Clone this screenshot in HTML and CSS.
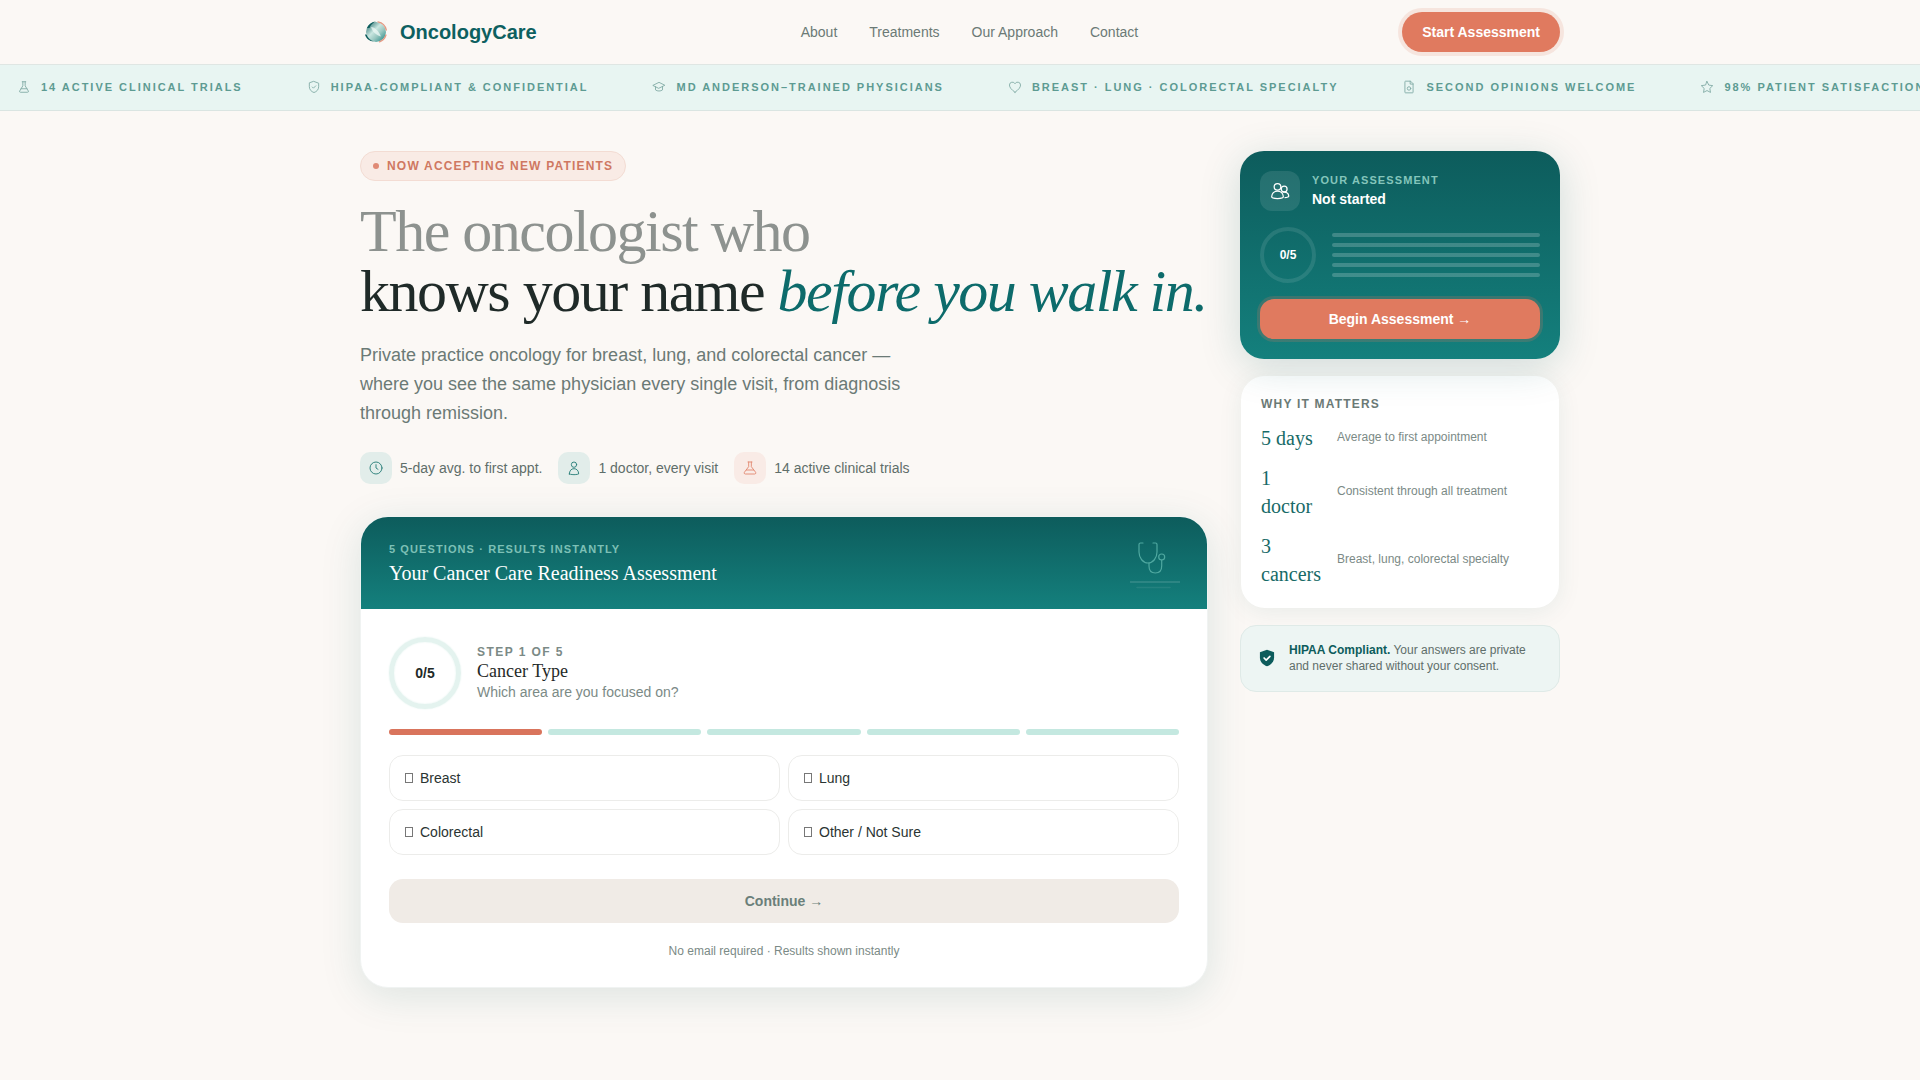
FILE: index.html
```html
<!DOCTYPE html>
<html lang="en">
<head>
<meta charset="utf-8">
<title>OncologyCare</title>
<link rel="stylesheet" href="styles.css">
</head>
<body>
<header class="nav">
  <div class="nav-inner">
    <a class="brand" href="#">
      <svg class="brand-mark" viewBox="0 0 24 24" width="24" height="24">
        <defs>
          <linearGradient id="lg" x1="0" y1="0" x2="1" y2="1">
            <stop offset="0" stop-color="#0d5c5c"/><stop offset=".42" stop-color="#c9e6e0"/><stop offset=".62" stop-color="#9cc9c2"/><stop offset="1" stop-color="#14807d"/>
          </linearGradient>
        </defs>
        <circle cx="12" cy="12" r="10" fill="url(#lg)"/>
        <path d="M2.500 14.500c1.500 3.500 4 6 7.500 7-4.500 0-8-3-9-7z" fill="#0d5c5c"/>
        <path d="M3 8c1.500-3.500 5-6.500 9-6.500-3 1-5.500 3.500-6.500 6.500z" fill="#0d5c5c"/>
        <path d="M14 1.800A10.500 10.500 0 0 1 22.300 10M22 15a10.500 10.500 0 0 1-6.500 6.800" fill="none" stroke="#e49a84" stroke-width="1.300" stroke-linecap="round"/>
        <path d="M7 7c4 0 8 4.500 10 9.500-4.500-1-8.500-4.500-10-9.500z" fill="#eef8f5" opacity=".75"/>
      </svg>
      <span class="brand-name">OncologyCare</span>
    </a>
    <nav class="nav-links">
      <a href="#">About</a><a href="#">Treatments</a><a href="#">Our Approach</a><a href="#">Contact</a>
    </nav>
    <a class="nav-cta" href="#">Start Assessment</a>
  </div>
</header>

<div class="ticker">
  <div class="tick"><svg viewBox="0 0 24 24"><path d="M9 3h6M10 3v7L4.500 19a1.500 1.500 0 0 0 1.300 2h12.400a1.500 1.500 0 0 0 1.300-2L14 10V3M7 15h10"/></svg><span>14 Active Clinical Trials</span></div>
  <div class="tick"><svg viewBox="0 0 24 24"><path d="M12 2.500l8 3v6c0 5-3.500 8.500-8 10-4.500-1.500-8-5-8-10v-6z"/><path d="M9 12l2 2 4-4"/></svg><span>HIPAA-Compliant &amp; Confidential</span></div>
  <div class="tick"><svg viewBox="0 0 24 24"><path d="M2 9l10-5 10 5-10 5z"/><path d="M6 11.500V17c3 2.500 9 2.500 12 0v-5.500"/></svg><span>MD Anderson–Trained Physicians</span></div>
  <div class="tick"><svg viewBox="0 0 24 24"><path d="M12 21C6 16.500 2.500 13 2.500 8.500A5 5 0 0 1 12 6.500a5 5 0 0 1 9.500 2C21.500 13 18 16.500 12 21z"/></svg><span>Breast · Lung · Colorectal Specialty</span></div>
  <div class="tick"><svg viewBox="0 0 24 24"><path d="M14 2H6a1 1 0 0 0-1 1v18a1 1 0 0 0 1 1h12a1 1 0 0 0 1-1V7z"/><path d="M14 2v5h5"/><circle cx="12" cy="14.500" r="3"/></svg><span>Second Opinions Welcome</span></div>
  <div class="tick"><svg viewBox="0 0 24 24"><path d="M12 2.500l3 6.200 6.800 1-5 4.800 1.200 6.800-6-3.200-6 3.200 1.200-6.800-5-4.800 6.800-1z"/></svg><span>98% Patient Satisfaction</span></div>
</div>

<main class="page">
  <section class="main-col">
    <div class="badge"><i class="dot"></i>Now Accepting New Patients</div>
    <h1><span class="h1-soft">The oncologist who</span><br>knows your name <em>before you walk in.</em></h1>
    <p class="lead">Private practice oncology for breast, lung, and colorectal cancer — where you see the same physician every single visit, from diagnosis through remission.</p>
    <ul class="chips">
      <li><span class="chip-ico"><svg viewBox="0 0 24 24"><circle cx="12" cy="12" r="9"/><path d="M12 7v5l3 2"/></svg></span>5-day avg. to first appt.</li>
      <li><span class="chip-ico"><svg viewBox="0 0 24 24"><circle cx="12" cy="7" r="4"/><path d="M5 21c0-5 3-8 7-8s7 3 7 8c0 0-3 1-7 1s-7-1-7-1z"/></svg></span>1 doctor, every visit</li>
      <li><span class="chip-ico coral"><svg viewBox="0 0 24 24"><path d="M9 3h6M10 3v7L3.500 18.500a1.800 1.800 0 0 0 1.500 2.500h14a1.800 1.800 0 0 0 1.500-2.500L14 10V3M6.500 15h11"/></svg></span>14 active clinical trials</li>
    </ul>

    <article class="quiz">
      <div class="quiz-head">
        <div>
          <div class="quiz-eyebrow">5 Questions · Results Instantly</div>
          <div class="quiz-title">Your Cancer Care Readiness Assessment</div>
        </div>
        <svg class="quiz-art" viewBox="0 0 50 50" width="50" height="50">
          <path d="M13 3H10.500C9.500 3 9 3.500 9 4.500V12c0 6 4 11 9 11s9-5 9-11V4.500C27 3.500 26.500 3 25.500 3H23"/>
          <path d="M19 23v3c0 5 3 7 6.300 7s6.400-2 6.400-7v-6"/>
          <circle cx="31.700" cy="17" r="3"/>
          <path class="faint" d="M0 42h50"/>
          <path class="fainter" d="M7 47.500h33"/>
        </svg>
      </div>
      <div class="quiz-body">
        <div class="step">
          <div class="ring"><span>0/5</span></div>
          <div class="step-text">
            <div class="step-label">Step 1 of 5</div>
            <div class="step-title">Cancer Type</div>
            <div class="step-sub">Which area are you focused on?</div>
          </div>
        </div>
        <div class="bars"><i class="on"></i><i></i><i></i><i></i><i></i></div>
        <div class="options">
          <button class="opt"><i class="tofu"></i>Breast</button>
          <button class="opt"><i class="tofu"></i>Lung</button>
          <button class="opt"><i class="tofu"></i>Colorectal</button>
          <button class="opt"><i class="tofu"></i>Other / Not Sure</button>
        </div>
        <button class="continue">Continue →</button>
        <p class="note">No email required · Results shown instantly</p>
      </div>
    </article>
  </section>

  <aside class="side">
    <div class="side-assess">
      <div class="sa-top">
        <span class="sa-ico"><svg viewBox="0 0 24 24"><circle cx="9" cy="7" r="4"/><circle cx="17" cy="9.500" r="3.500"/><path d="M2 19c0-4 3-7 7-7 4 0 7 3 7 7 0 1-3 2-7 2s-7-1-7-2z"/><path d="M15 13.500c4-1 7.500 1 7.500 4.500 0 1-2 1.800-5 2"/></svg></span>
        <div>
          <div class="sa-label">Your Assessment</div>
          <div class="sa-status">Not started</div>
        </div>
      </div>
      <div class="sa-mid">
        <div class="sa-ring"><span>0/5</span></div>
        <div class="sa-lines"><i></i><i></i><i></i><i></i><i></i></div>
      </div>
      <a class="sa-btn" href="#">Begin Assessment →</a>
    </div>

    <div class="side-why">
      <div class="why-h">Why It Matters</div>
      <div class="why-row"><div class="why-val">5 days</div><div class="why-txt">Average to first appointment</div></div>
      <div class="why-row"><div class="why-val">1 doctor</div><div class="why-txt">Consistent through all treatment</div></div>
      <div class="why-row"><div class="why-val">3 cancers</div><div class="why-txt">Breast, lung, colorectal specialty</div></div>
    </div>

    <div class="side-hipaa">
      <svg viewBox="0 0 24 24" width="20" height="20"><path class="sh" d="M12 2l8.500 3v6.500c0 5-3.500 8.800-8.500 10.500-5-1.700-8.500-5.500-8.500-10.500V5z"/><path class="ck" d="M8.500 12l2.500 2.500 4.500-4.500"/></svg>
      <p><strong>HIPAA Compliant.</strong> Your answers are private and never shared without your consent.</p>
    </div>
  </aside>
</main>
</body>
</html>
```

FILE: styles.css
```css
* { box-sizing: border-box; }
html, body { margin: 0; padding: 0; }
body {
  background: #fbf8f5;
  color: #1f2a28;
  font-family: "Liberation Sans", Arial, sans-serif;
  width: 1920px;
  height: 1080px;
  overflow: hidden;
}
a { text-decoration: none; color: inherit; }

.nav { height: 65px; border-bottom: 1px solid #dfe6e3; background: #fbf8f5; }
.nav-inner {
  width: 1200px; height: 64px; margin: 0 auto;
  display: flex; align-items: center; justify-content: space-between;
}
.brand { display: flex; align-items: center; gap: 12px; }
.brand-mark { margin-left: 4px; }
.brand-name { font-size: 20px; font-weight: 700; color: #0d6060; }
.nav-links { display: flex; gap: 32px; font-size: 14px; color: #6b7a76; }
.nav-cta {
  background: #e07a5f; color: #fff; font-size: 14px; font-weight: 700;
  height: 40px; padding: 0 20px; border-radius: 999px;
  display: flex; align-items: center;
  box-shadow: 0 0 0 4px rgba(224, 122, 95, .15);
}

.ticker {
  height: 46px; background: #e8f5f2; border-bottom: 1px solid #dae5e2;
  display: flex; align-items: center; gap: 64px;
  padding: 0 0 2px 17px; overflow: hidden; white-space: nowrap;
}
.tick {
  display: flex; align-items: center; gap: 10px; flex: none;
  font-size: 11px; font-weight: 700; letter-spacing: 0.18em;
  text-transform: uppercase; color: #5d9b92;
}
.tick svg {
  width: 14px; height: 14px; fill: none; stroke: #7fa9a3; stroke-width: 1.5;
  stroke-linecap: round; stroke-linejoin: round;
}

.page {
  width: 1200px; margin: 0 auto; padding-top: 40px;
  display: flex; gap: 32px; align-items: flex-start;
}
.main-col { width: 848px; flex: none; }
.side { width: 320px; flex: none; display: flex; flex-direction: column; gap: 17px; }

.badge {
  display: inline-flex; align-items: center; gap: 8px;
  height: 30px; padding: 0 12px;
  background: #f9ebe5; border: 1px solid #f3dcd3; border-radius: 999px;
  font-size: 12px; font-weight: 700; letter-spacing: 0.1em;
  text-transform: uppercase; color: #cf7862;
}
.dot { width: 6px; height: 6px; border-radius: 50%; background: #e08a75; }

h1 {
  margin: 20px 0 0; font-family: "Liberation Serif", "Times New Roman", serif;
  font-weight: 400; font-size: 60px; line-height: 60px; letter-spacing: -0.025em;
  color: #1f2a28;
}
.h1-soft { color: #8d928f; }
h1 em { color: #0d6b6b; font-style: italic; }

.lead {
  margin: 20px 0 0; width: 560px;
  font-size: 18px; line-height: 29px; color: #6b7a76;
}

.chips { list-style: none; margin: 24px 0 0; padding: 0; display: flex; gap: 16px; }
.chips li { display: flex; align-items: center; gap: 8px; font-size: 14px; color: #5f6e6a; }
.chip-ico {
  width: 32px; height: 32px; border-radius: 10px; background: #e2edea;
  display: flex; align-items: center; justify-content: center;
}
.chip-ico.coral { background: #f9ebe6; }
.chip-ico svg {
  width: 16px; height: 16px; fill: none; stroke: #2a7f7a; stroke-width: 1.4;
  stroke-linecap: round; stroke-linejoin: round;
}
.chip-ico.coral svg { stroke: #e28a72; }

.quiz {
  margin-top: 32px; height: 472px; background: #fff; border-radius: 28px;
  overflow: hidden; box-shadow: 0 8px 40px rgba(13, 92, 92, .13);
  border: 1px solid #f0f3f2;
}
.quiz-head {
  height: 92px; padding: 26px 28px 0;
  background: linear-gradient(180deg, #0d5c5c, #14807d);
  display: flex; justify-content: space-between; align-items: flex-start;
}
.quiz-eyebrow {
  font-size: 11px; font-weight: 700; letter-spacing: 0.1em;
  text-transform: uppercase; color: #7dc0b6;
}
.quiz-title {
  margin-top: 7px; font-family: "Liberation Serif", serif; font-size: 20px; color: #fff;
}
.quiz-art {
  fill: none; stroke: #4fa8a0; stroke-width: 1.2; stroke-linecap: round;
  stroke-linejoin: round; margin: -3px -1px 0 0; flex: none;
}
.quiz-art .faint { stroke: rgba(255, 255, 255, .16); stroke-width: 1.5; }
.quiz-art .fainter { stroke: rgba(255, 255, 255, .08); stroke-width: 1.5; }

.quiz-body { padding: 28px 28px 0; }
.step { display: flex; align-items: center; gap: 16px; }
.ring {
  width: 72px; height: 72px; border-radius: 50%; border: 5px solid #e4f3ef;
  box-shadow: 0 0 2px #e4f3ef, inset 0 0 2px #e4f3ef;
  display: flex; align-items: center; justify-content: center;
  font-size: 14px; font-weight: 700; color: #1f2a28; flex: none;
}
.step-label {
  font-size: 12px; line-height: 14px; font-weight: 700; letter-spacing: 0.12em;
  text-transform: uppercase; color: #7b8a86;
}
.step-title { font-family: "Liberation Serif", serif; font-size: 18px; line-height: 24px; color: #1f2a28; }
.step-sub { font-size: 14px; line-height: 18px; color: #7b8a86; }

.bars { display: flex; gap: 6px; margin-top: 20px; }
.bars i { flex: 1; height: 6px; border-radius: 3px; background: #c4e8e0; }
.bars i.on { background: #d9745c; }

.options { display: grid; grid-template-columns: 1fr 1fr; gap: 8px; margin-top: 20px; }
.opt {
  height: 46px; border: 1.5px solid #ececea; border-radius: 14px; background: #fff;
  display: flex; align-items: center; gap: 7px; padding: 0 15px;
  font: 14px "Liberation Sans", Arial, sans-serif; color: #2a3432; text-align: left;
}
.tofu { width: 8px; height: 10px; border: 1px solid #777; flex: none; }

.continue {
  display: block; width: 100%; height: 44px; margin-top: 24px;
  border: 0; border-radius: 14px; background: #f0ebe6; color: #6b7f7a;
  font: 700 14px "Liberation Sans", Arial, sans-serif;
}
.note { margin: 21px 0 0; text-align: center; font-size: 12px; color: #7b8a86; }

.side-assess {
  position: relative; z-index: 1;
  height: 208px; padding: 20px; border-radius: 24px;
  background: linear-gradient(180deg, #0d5c5c, #14807d);
  box-shadow: 0 8px 40px rgba(13, 92, 92, .18);
}
.sa-top { display: flex; align-items: center; gap: 12px; }
.sa-ico {
  width: 40px; height: 40px; border-radius: 12px; background: rgba(255, 255, 255, .1);
  display: flex; align-items: center; justify-content: center;
}
.sa-ico svg { width: 20px; height: 20px; fill: none; stroke: #fff; stroke-width: 1.5; }
.sa-label {
  font-size: 11px; font-weight: 700; letter-spacing: 0.1em; text-transform: uppercase;
  color: #84c5bb;
}
.sa-status { font-size: 14px; font-weight: 700; color: #fff; margin: 5px 0 2px; }
.sa-mid { display: flex; align-items: center; gap: 16px; margin-top: 16px; }
.sa-ring {
  width: 56px; height: 56px; border-radius: 50%; border: 4px solid rgba(255, 255, 255, .1);
  display: flex; align-items: center; justify-content: center;
  font-size: 12px; font-weight: 700; color: #fff; flex: none;
}
.sa-lines { flex: 1; display: flex; flex-direction: column; gap: 6px; }
.sa-lines i { height: 4px; border-radius: 2px; background: rgba(255, 255, 255, .2); }
.sa-btn {
  display: flex; align-items: center; justify-content: center;
  height: 40px; margin-top: 16px; border-radius: 14px;
  background: #e07a5f; color: #fff; font-size: 14px; font-weight: 700;
  box-shadow: 0 0 0 3px rgba(224, 122, 95, .2);
}

.side-why {
  height: 232px; margin: 0 1px; padding: 21px 20px 0; border-radius: 24px; background: #fff;
  box-shadow: 0 4px 24px rgba(13, 92, 92, .08);
}
.why-h {
  font-size: 12px; font-weight: 700; letter-spacing: 0.1em; text-transform: uppercase;
  color: #6b7a76; margin-bottom: 12px;
}
.why-row { display: flex; align-items: center; gap: 16px; margin-bottom: 11px; }
.why-val {
  flex: 0 0 60px; padding-top: 1px; font-family: "Liberation Serif", serif; font-size: 20px; line-height: 28px; color: #176a67;
}
.why-txt { font-size: 12px; color: #7b8a86; margin-top: -2px; }

.side-hipaa {
  height: 67px; padding: 0 16px 2px; border-radius: 16px;
  background: #edf5f3; border: 1px solid #dfeae7;
  display: flex; align-items: center; gap: 12px;
}
.side-hipaa svg { flex: none; }
.side-hipaa .sh { fill: #0d5c5c; }
.side-hipaa .ck { fill: none; stroke: #fff; stroke-width: 2; stroke-linecap: round; stroke-linejoin: round; }
.side-hipaa p { margin: 0; font-size: 12px; line-height: 16px; color: #5f6e6a; }
.side-hipaa strong { color: #0d5c5c; }
```
